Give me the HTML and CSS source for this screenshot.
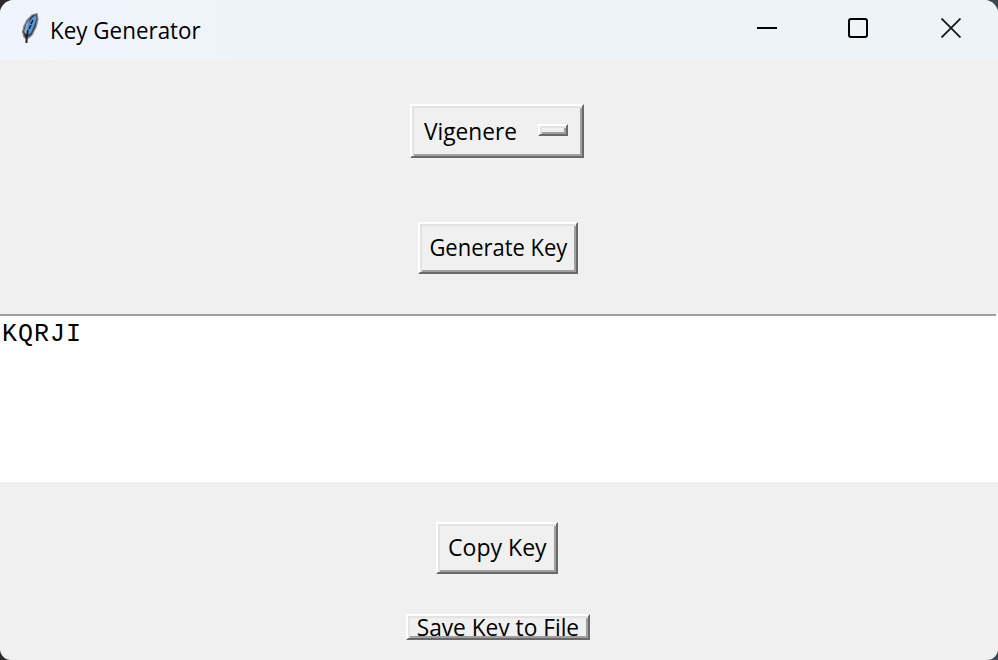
FILE: index.html
```html
<!DOCTYPE html>
<html lang="en">
<head>
<meta charset="utf-8">
<title>Key Generator</title>
<link rel="stylesheet" href="styles.css">
</head>
<body>
<div class="window">
  <header class="titlebar">
    <svg class="feather" width="20" height="34" viewBox="0 0 20 34">
      <path d="M17 1.500L12 3L7 8L4 14L2.500 20L4 25L7 27L12 23L16 15L18 7Z" fill="#3b4048" stroke="#858a91" stroke-width="1.200"/>
      <path d="M16 3L12 6L7 14L5.500 20L6 24L11 21L14 14L16.500 7Z" fill="#5399df"/>
      <path d="M10 6L6 12L4 20L6 22L8 13Z" fill="#91a8bc"/>
      <path d="M13 8L11 12M11 13L9 17M8 18L7 24" fill="none" stroke="#17202a" stroke-width="1.600"/>
      <path d="M6.500 22V31" stroke="#222" stroke-width="2"/>
    </svg>
    <h1 class="title"><span>Key Generator</span></h1>
    <div class="controls">
      <svg width="20" height="20" viewBox="0 0 20 20"><path d="M0 10H20" stroke="#000" stroke-width="2"/></svg>
      <svg width="20" height="20" viewBox="0 0 20 20"><rect x="1" y="1" width="18" height="18" rx="2" fill="none" stroke="#000" stroke-width="2"/></svg>
      <svg width="20" height="20" viewBox="0 0 20 20"><path d="M.5 .5L19.500 19.500M19.500 .5L.5 19.500" stroke="#111820" stroke-width="1.800"/></svg>
    </div>
  </header>
  <main class="content">
    <button class="btn select"><span class="label vigenere">Vigenere</span><i class="indicator"></i></button>
    <button class="btn generate"><span class="label">Generate Key</span></button>
    <div class="output">KQRJI</div>
    <button class="btn copy"><span class="label">Copy Key</span></button>
    <button class="btn save"><span class="label">Save Key to File</span></button>
  </main>
</div>
</body>
</html>
```
FILE: styles.css
```css
* { box-sizing: border-box; }
body { margin: 0; background: linear-gradient(90deg, #29292b, #3d4651); overflow: hidden; }
.window { width: 998px; height: 660px; border-radius: 14px 14px 11px 11px; overflow: hidden; background: #f0f0f0; }
.titlebar { height: 60px; display: flex; align-items: flex-start; background: linear-gradient(90deg, #f0f4fc, #eef3f8 40%); }
.feather { margin: 12px 0 0 20px; }
.title { margin: 13px 0 0 10px; font: 400 24px/34px "Open Sans", sans-serif; color: #000; white-space: nowrap; }
.title span { display: inline-block; transform: scaleX(.933); transform-origin: left; }
.controls { display: flex; justify-content: space-between; width: 204px; margin: 18px 37px 0 auto; }
.controls svg { display: block; }
.controls svg:nth-child(2) { margin-right: 2px; }
.content { display: flex; flex-direction: column; align-items: center; }
.btn { display: flex; align-items: center; justify-content: center; padding: 0; margin: 0 4px 0 0; border: 2px solid; border-color: #fff #696969 #696969 #fff; border-radius: 0; background: #f0f0f0; box-shadow: inset 2px 2px #e3e3e3, inset -2px -2px #a0a0a0; color: #000; font: 24px/32px "Open Sans", sans-serif; overflow: hidden; }
.label { flex: none; white-space: nowrap; transform: scaleX(.915); }
.select { width: 174px; height: 54px; margin-top: 44px; justify-content: flex-start; }
.vigenere { margin-left: 12px; transform: scaleX(.945); transform-origin: left; }
.indicator { flex: none; width: 30px; height: 12px; margin-left: auto; margin-right: 14px; margin-top: -2px; border: 2px solid; border-color: #fff #696969 #696969 #fff; box-shadow: inset 2px 2px #e3e3e3, inset -2px -2px #a0a0a0; }
.generate { width: 160px; height: 52px; margin-top: 64px; margin-right: 2px; padding-bottom: 2px; }
.output { width: 998px; height: 168px; margin-top: 40px; padding: 6px 0 0 2px; background: linear-gradient(#a0a0a0, #a0a0a0) 0 0 / 996px 2px no-repeat #fff; color: #000; font: 25px/30px "Liberation Mono", monospace; letter-spacing: 1px; }
.copy { width: 122px; height: 52px; margin-top: 40px; padding-bottom: 2px; }
.copy .label { transform: scaleX(.96); }
.save { width: 184px; height: 26px; margin-top: 40px; margin-right: 2px; padding-bottom: 2px; }
.save .label { height: 20px; line-height: 22px; overflow: hidden; transform: scaleX(.945); }
```
